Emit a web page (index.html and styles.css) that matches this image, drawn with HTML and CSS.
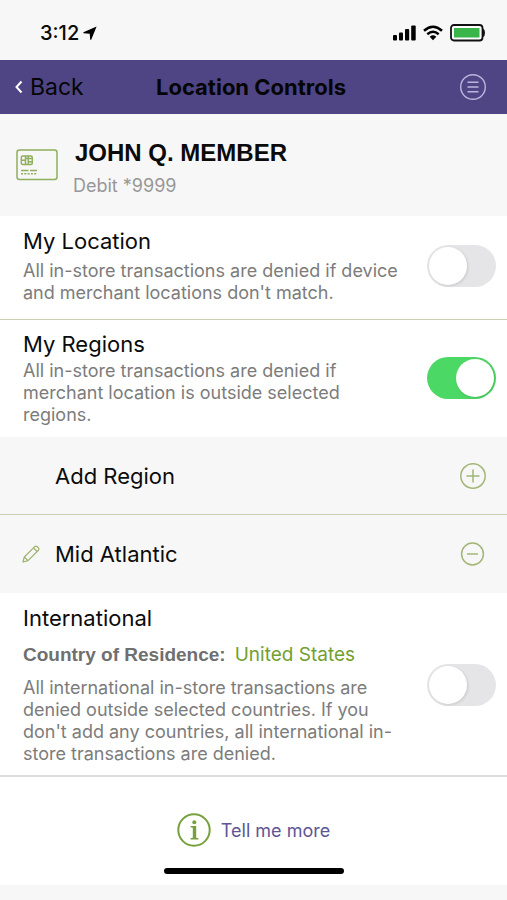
FILE: index.html
```html
<!DOCTYPE html>
<html lang="en">
<head>
<meta charset="utf-8">
<meta name="viewport" content="width=device-width, initial-scale=1">
<title>Location Controls</title>
<link rel="stylesheet" href="styles.css">
</head>
<body>
<div class="status">
  <div class="clock">
    <span>3:12</span>
    <svg width="14" height="14" viewBox="0 0 14 14" aria-hidden="true"><path d="M13.6.4.4 6.3v1l6.3.4.5 6h1z" fill="#000"/></svg>
  </div>
  <div class="indicators">
    <svg width="23" height="16" viewBox="0 0 23 16" aria-hidden="true"><g fill="#000"><rect x="0" y="10" width="4" height="5.5" rx="1"/><rect x="6" y="7.5" width="4" height="8" rx="1"/><rect x="12" y="4" width="4.2" height="11.500" rx="1"/><rect x="18.200" y="0.500" width="4.500" height="15" rx="1"/></g></svg>
    <svg width="20" height="16" viewBox="0 0 20 16" aria-hidden="true"><g fill="none" stroke="#000" stroke-width="2.500"><path d="M1 5.800Q10-2.200 19 5.800"/><path d="M4.300 9.200Q10 4.200 15.700 9.200"/></g><path d="M6.700 11.700Q10 8.900 13.300 11.700L10 15.200z" fill="#000"/></svg>
    <svg width="35" height="18" viewBox="0 0 35 18" aria-hidden="true"><rect x="1" y="1" width="31.500" height="15.500" rx="3" fill="#fff" stroke="#111" stroke-width="1.800"/><rect x="4" y="4" width="25.500" height="9.500" fill="#39b54a"/><path d="M33 4.500q2 .8 2 4.300t-2 4.300z" fill="#111"/></svg>
  </div>
</div>

<header class="nav">
  <a class="back" href="#">
    <svg width="8" height="14" viewBox="0 0 8 14" aria-hidden="true"><path d="M6.500 1.500 1.500 7l5 5.500" fill="none" stroke="#fff" stroke-width="2"/></svg>
    <span>Back</span>
  </a>
  <h1>Location Controls</h1>
  <button class="icon-button" type="button" aria-label="Menu">
    <svg width="28" height="28" viewBox="0 0 28 28" aria-hidden="true"><g fill="none" stroke="#bdb6dc" stroke-width="1.400"><circle cx="14" cy="14" r="12.300"/><path d="M8.500 9.300h11M8.500 14h11M8.500 18.700h11" stroke-width="1.600"/></g></svg>
  </button>
</header>

<main>
  <section class="account">
    <svg width="42" height="32" viewBox="0 0 42 32" aria-hidden="true"><g fill="none" stroke="#8fb05c" stroke-width="1.500"><rect x="1" y="1" width="40" height="29.500" rx="2.500"/><rect x="5.300" y="7" width="11" height="8.500" rx="1.500"/><path d="M5.300 11.200h4.200M12 9.500h4M12 12.800h4M9.500 7v8.500M12.300 7v8.500M9.500 9.500h2.800"/><path d="M5 21.500h7.500M14 21.500h7" stroke-width="1.400"/><path d="M5 24.700h16.500" stroke-dasharray="2 1.300"/></g></svg>
    <div class="holder">
      <h2 class="member">JOHN Q. MEMBER</h2>
      <p class="card">Debit *9999</p>
    </div>
  </section>

  <section class="setting ruled">
    <div class="copy">
      <h2><label for="location">My Location</label></h2>
      <p class="spaced">All in-store transactions are denied if device and merchant locations don't match.</p>
    </div>
    <input class="switch" type="checkbox" role="switch" id="location">
  </section>

  <section class="setting regions">
    <div class="copy narrow">
      <h2><label for="regions">My Regions</label></h2>
      <p>All in-store transactions are denied if merchant location is outside selected regions.</p>
    </div>
    <input class="switch" type="checkbox" role="switch" id="regions" checked>
  </section>

  <ul class="region-list">
    <li class="ruled">
      <span class="region">Add Region</span>
      <button class="icon-button" type="button" aria-label="Add region">
        <svg width="28" height="28" viewBox="0 0 28 28" aria-hidden="true"><g fill="none" stroke="#a3b678" stroke-width="1.500"><circle cx="14" cy="14" r="12.200"/><path d="M7.500 14h13M14 7.500v13"/></g></svg>
      </button>
    </li>
    <li>
      <button class="icon-button edit" type="button" aria-label="Edit Mid Atlantic">
        <svg width="18" height="18" viewBox="0 0 18 18" aria-hidden="true"><g fill="none" stroke="#9cb36b" stroke-width="1.200" stroke-linejoin="round"><path d="M1 17l1.300-5L12.500 1.800q1.200-1.200 2.500-.4l1.600 1.600q.8 1.300-.4 2.500L6 15.700z"/><path d="M2.300 12 6 15.700M11.500 3l3.700 3.700"/></g></svg>
      </button>
      <span class="region">Mid Atlantic</span>
      <button class="icon-button" type="button" aria-label="Remove Mid Atlantic">
        <svg width="28" height="28" viewBox="0 0 28 28" aria-hidden="true"><g fill="none" stroke="#a3b678" stroke-width="1.500"><circle cx="13.500" cy="14" r="10.900"/><path d="M8 14h11"/></g></svg>
      </button>
    </li>
  </ul>

  <section class="setting international">
    <div class="copy">
      <h2><label for="international">International</label></h2>
      <p class="residence"><strong>Country of Residence:</strong><a href="#">United States</a></p>
      <p>All international in-store transactions are denied outside selected countries. If you don't add any countries, all international in-store transactions are denied.</p>
    </div>
    <input class="switch" type="checkbox" role="switch" id="international">
  </section>
</main>

<footer>
  <a class="more" href="#">
    <svg width="34" height="34" viewBox="0 0 34 34" aria-hidden="true"><circle cx="17" cy="17" r="15.700" fill="none" stroke="#76a03d" stroke-width="2"/><g fill="#76a03d"><circle cx="17.300" cy="9.200" r="2"/><path d="M13.500 13h5.700v11.700l2.300.6V26.500h-8V25.300l2.300-.6V14.700l-2.300-.5z"/></g></svg>
    <span>Tell me more</span>
  </a>
  <div class="home-bar"></div>
</footer>
</body>
</html>
```
FILE: styles.css
```css
* {
  box-sizing: border-box;
}

body {
  margin: 0;
  background: #f7f7f7;
  color: #0b0b0b;
  font-family: Inter, "Liberation Sans", sans-serif;
}

h1, h2, p, ul {
  margin: 0;
  padding: 0;
}

a {
  color: inherit;
  text-decoration: none;
}

svg {
  display: block;
}

.status {
  display: flex;
  justify-content: space-between;
  align-items: center;
  height: 60px;
  padding: 6px 22px 0 40px;
}

.clock, .indicators {
  display: flex;
  align-items: center;
}

.clock {
  gap: 4px;
  font-size: 20px;
  font-weight: 500;
}

.indicators {
  gap: 7px;
}

.nav {
  display: grid;
  grid-template-columns: 1fr auto 1fr;
  align-items: center;
  height: 54px;
  padding: 0 20px 0 15px;
  background: #4f4585;
  color: #050505;
}

.back {
  display: flex;
  align-items: center;
  gap: 7px;
  font-size: 23px;
}

h1 {
  font-size: 22px;
  font-weight: 700;
}

.icon-button {
  flex: none;
  padding: 0;
  border: 0;
  background: none;
  cursor: pointer;
}

.nav .icon-button {
  justify-self: end;
}

.account {
  display: flex;
  align-items: center;
  gap: 15px;
  height: 102px;
  padding: 0 16px;
}

.holder {
  padding-top: 8px;
}

.member {
  padding-left: 2px;
  font: bold 24px/30px "Liberation Sans", sans-serif;
}

.card {
  margin-top: 4px;
  color: #979797;
  font-size: 18px;
  line-height: 28px;
}

.setting {
  display: flex;
  justify-content: space-between;
  align-items: center;
  padding: 11px 11px 15px 23px;
  background: #fff;
}

.ruled {
  border-bottom: 1px solid #c9cfb0;
}

.copy {
  max-width: 390px;
  color: #7c7c7c;
  font-size: 18px;
  line-height: 22px;
}

.narrow {
  max-width: 340px;
}

.copy h2 {
  color: #0b0b0b;
  font-size: 22px;
  font-weight: 400;
  line-height: 28px;
}

.copy .spaced {
  margin-top: 5px;
}

.regions {
  padding-top: 10px;
  padding-bottom: 11px;
}

.regions p {
  margin-top: 2px;
}

.switch {
  flex: none;
  appearance: none;
  display: flex;
  align-items: center;
  width: 69px;
  height: 42px;
  margin: 0;
  padding: 2px;
  border-radius: 21px;
  background: #e5e5e7;
  cursor: pointer;
}

.switch::before {
  content: "";
  width: 38px;
  height: 38px;
  border-radius: 50%;
  background: #fff;
  box-shadow: 1px 1px 3px rgba(0, 0, 0, 0.12);
}

.switch:checked {
  justify-content: flex-end;
  background: #4cd864;
}

.region-list {
  list-style: none;
}

.region-list li {
  display: grid;
  grid-template-columns: 33px 1fr auto;
  align-items: center;
  height: 78px;
  padding: 0 20px 0 22px;
}

.region {
  grid-column: 2;
  font-size: 22px;
}

.international {
  padding-bottom: 10px;
  border-bottom: 2px solid #dcdcdc;
}

.copy .residence {
  display: flex;
  gap: 9px;
  margin: 11px 0 10px;
  font-size: 19px;
  line-height: 24px;
}

.residence strong {
  color: #6f6f6f;
  font-family: "Liberation Sans", sans-serif;
}

.residence a {
  color: #72a030;
}

footer {
  display: flex;
  flex-direction: column;
  align-items: center;
  padding: 36px 0 11px;
  background: #fff;
}

.more {
  display: flex;
  align-items: center;
  gap: 10px;
  color: #5f5596;
  font-size: 18px;
}

.home-bar {
  width: 180px;
  height: 6px;
  margin-top: 21px;
  border-radius: 3px;
  background: #000;
}
```
